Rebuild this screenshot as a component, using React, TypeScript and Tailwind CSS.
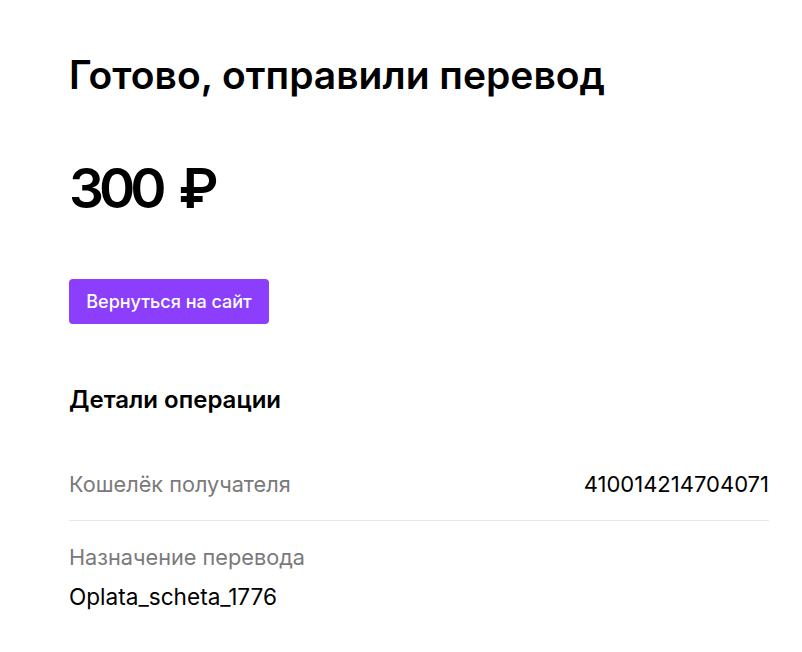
export default function App() {
  return (
    <div className="min-h-[652px] w-[802px] bg-white" style={{ fontFamily: "Inter, 'Noto Sans', sans-serif" }}>
      <div className="w-[700px] pl-[69px] pt-[51px] box-content">
        <h1 className="text-[39px] leading-[48px] font-semibold text-black">Готово, отправили перевод</h1>
        <div className="mt-[57px] text-[55px] leading-[64px] font-semibold text-black tracking-[-5px]">300<span className="ml-[17px]">₽</span></div>
        <button className="mt-[59px] h-[45px] w-[200px] rounded-[4px] bg-[#8b3ffd] text-[18px] font-medium text-white">Вернуться на сайт</button>
        <h2 className="mt-[61px] text-[24px] leading-[30px] font-semibold text-black">Детали операции</h2>
        <div className="mt-[54px] flex items-baseline justify-between pb-[21px] border-b border-[#e8e8e8]">
          <span className="text-[21.7px] leading-[30px] text-[#7a7a7a]">Кошелёк получателя</span>
          <span className="text-[22px] leading-[30px] text-black">410014214704071</span>
        </div>
        <div className="pt-[21px]">
          <div className="text-[21.7px] leading-[30px] text-[#7a7a7a]">Назначение перевода</div>
          <div className="mt-[10px] text-[22.6px] leading-[30px] text-black">Oplata_scheta_1776</div>
        </div>
      </div>
    </div>
  );
}
